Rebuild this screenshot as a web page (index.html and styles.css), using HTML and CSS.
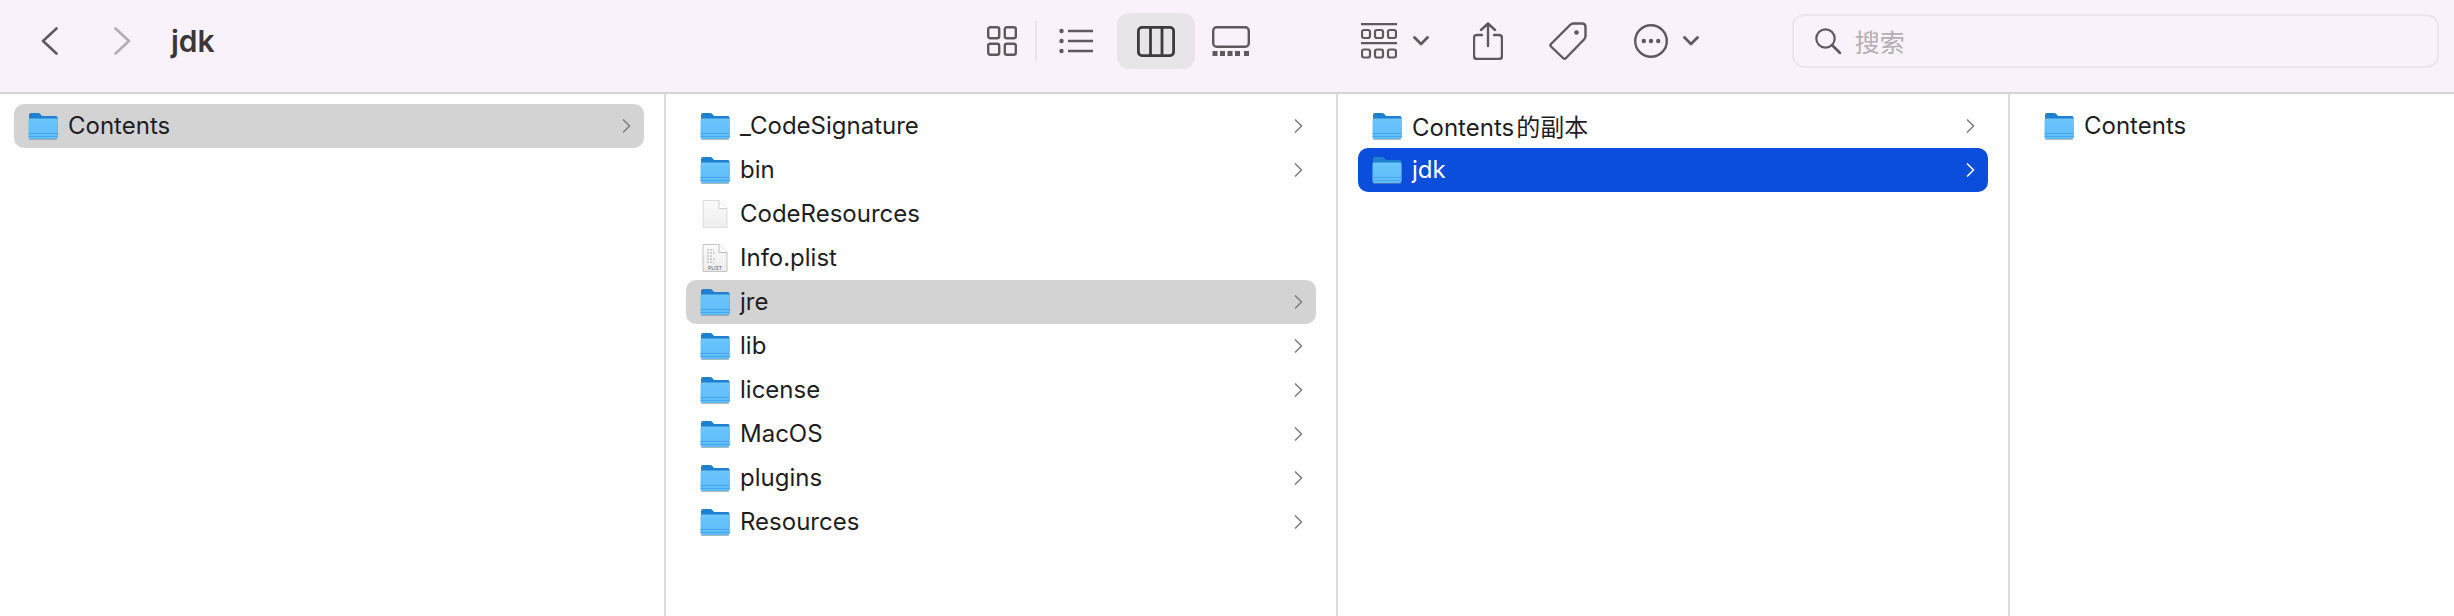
FILE: index.html
```html
<!DOCTYPE html>
<html lang="zh">
<head>
    <meta charset="UTF-8">
    <title>jdk</title>
    <link rel="stylesheet" href="styles.css">
</head>
<body>
    <svg class="defs" width="0" height="0">
        <defs>
            <linearGradient id="folder-body" x1="0" y1="0" x2="0" y2="1">
                <stop offset="0" stop-color="#6cc6fd"/>
                <stop offset="1" stop-color="#5cbbf9"/>
            </linearGradient>
            <linearGradient id="doc-body" x1="0" y1="0" x2="0" y2="1">
                <stop offset="0" stop-color="#fafafa"/>
                <stop offset="1" stop-color="#eeeeee"/>
            </linearGradient>
            <symbol id="folder" viewBox="0 0 30 28">
                <path d="M1 26V3q0-2 2-2h7q1.500 0 2.500 1.200L14 4h14q1.500 0 1.500 1.500V26z" fill="#1f7fd0"/>
                <path d="M.5 8q0-1.500 1.500-1.500h26q1.500 0 1.500 1.500v17q0 2-2 2H2.500q-2 0-2-2z" fill="url(#folder-body)"/>
                <path d="M.5 21.500h29M.5 24.500h29" stroke="#4aa6ea" stroke-width="1" fill="none"/>
                <path d="M1 27.500h28" stroke="#7a8a99" stroke-width="1" opacity=".6"/>
            </symbol>
            <symbol id="chev" viewBox="0 0 10 16">
                <path d="M2 1.500 8.500 8 2 14.500" fill="none" stroke="currentColor" stroke-width="1.500"/>
            </symbol>
            <symbol id="down" viewBox="0 0 16 10">
                <path d="M1.500 1.500 8 8l6.500-6.500" fill="none" stroke="currentColor" stroke-width="2.800" stroke-linecap="round" stroke-linejoin="round"/>
            </symbol>
        </defs>
    </svg>

    <header class="toolbar">
        <svg class="nav-back" width="17" height="28" viewBox="0 0 17 28"><path d="M15.500 1.500 2 14l13.500 12.500" fill="none" stroke="currentColor" stroke-width="2.600" stroke-linecap="round" stroke-linejoin="round"/></svg>
        <svg class="nav-forward" width="17" height="28" viewBox="0 0 17 28"><path d="M1.500 1.500 15 14 1.500 26.500" fill="none" stroke="currentColor" stroke-width="2.600" stroke-linecap="round" stroke-linejoin="round"/></svg>
        <span class="title">jdk</span>

        <div class="views">
            <svg class="ico" width="30" height="30" viewBox="0 0 30 30"><g fill="none" stroke="currentColor" stroke-width="2.400"><rect x="1.200" y="1.200" width="11" height="11" rx="2"/><rect x="17.800" y="1.200" width="11" height="11" rx="2"/><rect x="1.200" y="17.800" width="11" height="11" rx="2"/><rect x="17.800" y="17.800" width="11" height="11" rx="2"/></g></svg>
            <span class="view-sep"></span>
            <svg class="ico ico-list" width="34" height="26" viewBox="0 0 34 26"><g fill="currentColor"><circle cx="2.500" cy="3" r="2.200"/><circle cx="2.500" cy="13" r="2.200"/><circle cx="2.500" cy="23" r="2.200"/></g><path d="M9 3h25M9 13h25M9 23h25" stroke="currentColor" stroke-width="2.400"/></svg>
            <div class="view-on">
                <svg width="38" height="31" viewBox="0 0 38 31"><g fill="none" stroke="#3f3a3f" stroke-width="2.800"><rect x="1.400" y="1.400" width="35.200" height="28.200" rx="3.500"/><path d="M13.500 1.400v28.200M25 1.400v28.200"/></g></svg>
            </div>
            <svg class="ico ico-gallery" width="38" height="30" viewBox="0 0 38 30"><rect x="1.200" y="1.200" width="35.600" height="19.600" rx="3.500" fill="none" stroke="currentColor" stroke-width="2.400"/><g fill="currentColor"><rect x="0.500" y="25" width="5" height="5"/><rect x="8" y="25" width="5" height="5"/><rect x="15.500" y="25" width="5" height="5"/><rect x="23" y="25" width="5" height="5"/><rect x="32" y="25" width="5" height="5"/></g></svg>
        </div>

        <div class="actions">
            <svg class="ico" width="36" height="36" viewBox="0 0 36 36"><g fill="none" stroke="currentColor" stroke-width="2.200"><path d="M0 1.200h36M0 20.200h36"/><rect x="1" y="7" width="8" height="8" rx="2"/><rect x="14" y="7" width="8" height="8" rx="2"/><rect x="27" y="7" width="8" height="8" rx="2"/><rect x="1" y="26.500" width="8" height="8" rx="2"/><rect x="14" y="26.500" width="8" height="8" rx="2"/><rect x="27" y="26.500" width="8" height="8" rx="2"/></g></svg>
            <svg class="ico ico-down" width="16" height="10"><use href="#down"/></svg>
            <svg class="ico ico-share" width="30" height="38" viewBox="0 0 30 38"><g fill="none" stroke="currentColor" stroke-width="2.400" stroke-linecap="round" stroke-linejoin="round"><path d="M9 13H4q-3 0-3 3v18q0 3 3 3h22q3 0 3-3V16q0-3-3-3h-5"/><path d="M15 24V2M8 8l7-6.500L22 8"/></g></svg>
            <svg class="ico ico-tag" width="38" height="38" viewBox="0 0 38 38"><path d="M2 22 21 3q1.500-1.500 3.500-1.500H33q3.500 0 3.500 3.500v9q0 2-1.500 3.500L17 36q-1.500 1.500-3 0L2 24.500q-1.200-1.200 0-2.500z" fill="none" stroke="currentColor" stroke-width="2.400" stroke-linejoin="round"/><circle cx="27.500" cy="10.500" r="2.300" fill="currentColor"/></svg>
            <svg class="ico ico-more" width="34" height="34" viewBox="0 0 34 34"><circle cx="17" cy="17" r="15.800" fill="none" stroke="currentColor" stroke-width="2.400"/><g fill="currentColor"><circle cx="9.800" cy="17" r="2.200"/><circle cx="17" cy="17" r="2.200"/><circle cx="24.200" cy="17" r="2.200"/></g></svg>
            <svg class="ico ico-down-more" width="16" height="10"><use href="#down"/></svg>
        </div>

        <div class="search">
            <svg class="ico" width="26" height="26" viewBox="0 0 26 26"><circle cx="10.500" cy="10.500" r="9.200" fill="none" stroke="currentColor" stroke-width="2.200"/><path d="m17 17 8 8" stroke="currentColor" stroke-width="2.600" stroke-linecap="round"/></svg>
            <span class="search-text">搜索</span>
        </div>
    </header>

    <main class="browser">
        <section class="col col-first">
            <div class="row sel-gray"><svg class="folder"><use href="#folder"/></svg><span class="name">Contents</span><svg class="chev"><use href="#chev"/></svg></div>
        </section>

        <section class="col">
            <div class="row"><svg class="folder"><use href="#folder"/></svg><span class="name">_CodeSignature</span><svg class="chev"><use href="#chev"/></svg></div>
            <div class="row"><svg class="folder"><use href="#folder"/></svg><span class="name">bin</span><svg class="chev"><use href="#chev"/></svg></div>
            <div class="row">
                <svg class="doc" viewBox="0 0 26 30"><path d="M1 1.500h16l8 8v19H1z" fill="url(#doc-body)" stroke="#dcdcdc"/><path d="M17 1.500v8h8" fill="#fff" stroke="#d0d0d0"/></svg>
                <span class="name">CodeResources</span>
            </div>
            <div class="row">
                <svg class="doc" viewBox="0 0 26 30"><path d="M1 1.500h16l8 8v19H1z" fill="url(#doc-body)" stroke="#c4c4c4"/><path d="M17 1.500v8h8" fill="#fff" stroke="#bbb"/><path d="M5 7h7M5 10h8M5 13h6M5 16h8M5 19h7" stroke="#a9a9a9" stroke-width="1.200" stroke-dasharray="2 1"/><text class="doc-label" x="13" y="26.500" text-anchor="middle">PLIST</text></svg>
                <span class="name">Info.plist</span>
            </div>
            <div class="row sel-gray"><svg class="folder"><use href="#folder"/></svg><span class="name">jre</span><svg class="chev"><use href="#chev"/></svg></div>
            <div class="row"><svg class="folder"><use href="#folder"/></svg><span class="name">lib</span><svg class="chev"><use href="#chev"/></svg></div>
            <div class="row"><svg class="folder"><use href="#folder"/></svg><span class="name">license</span><svg class="chev"><use href="#chev"/></svg></div>
            <div class="row"><svg class="folder"><use href="#folder"/></svg><span class="name">MacOS</span><svg class="chev"><use href="#chev"/></svg></div>
            <div class="row"><svg class="folder"><use href="#folder"/></svg><span class="name">plugins</span><svg class="chev"><use href="#chev"/></svg></div>
            <div class="row"><svg class="folder"><use href="#folder"/></svg><span class="name">Resources</span><svg class="chev"><use href="#chev"/></svg></div>
        </section>

        <section class="col">
            <div class="row"><svg class="folder"><use href="#folder"/></svg><span class="name">Contents<span class="cjk">的副本</span></span><svg class="chev"><use href="#chev"/></svg></div>
            <div class="row sel-blue"><svg class="folder"><use href="#folder"/></svg><span class="name">jdk</span><svg class="chev"><use href="#chev"/></svg></div>
        </section>

        <section class="col col-last">
            <div class="row"><svg class="folder"><use href="#folder"/></svg><span class="name">Contents</span></div>
        </section>
    </main>
</body>
</html>
```

FILE: styles.css
```css
* {
    box-sizing: border-box;
}
html, body {
    margin: 0;
    width: 100%;
    height: 100%;
    overflow: hidden;
    background: #fff;
}
body {
    font-family: 'Inter', 'Noto Sans CJK SC', sans-serif;
    color: #1f1e1f;
}
.defs {
    position: absolute;
}

/* toolbar */
.toolbar {
    display: flex;
    align-items: center;
    height: 94px;
    padding-bottom: 10px;
    background: #f9f2fa;
    border-bottom: 2px solid #d8d3d8;
    color: #5f595f;
}
.nav-back {
    margin-left: 41px;
    color: #5f5a5f;
}
.nav-forward {
    margin-left: 56px;
    color: #b2aeb2;
}
.title {
    margin-left: 40px;
    font-size: 30px;
    font-weight: 600;
    color: #3a373a;
}
.views {
    display: flex;
    align-items: center;
    margin-left: 772px;
}
.view-sep {
    width: 2px;
    height: 40px;
    margin-left: 18px;
    background: #e8e2e9;
}
.ico-list {
    margin-left: 22px;
}
.view-on {
    display: flex;
    align-items: center;
    justify-content: center;
    width: 78px;
    height: 56px;
    margin-left: 24px;
    border-radius: 12px;
    background: #e9e3ea;
}
.ico-gallery {
    margin-left: 17px;
}
.actions {
    display: flex;
    align-items: center;
    margin-left: 111px;
}
.ico-down {
    margin-left: 16px;
}
.ico-share {
    margin-left: 44px;
}
.ico-tag {
    margin-left: 46px;
}
.ico-more {
    margin-left: 47px;
}
.ico-down-more {
    margin-left: 15px;
}
.search {
    display: flex;
    align-items: center;
    width: 647px;
    height: 54px;
    margin-left: 93px;
    padding-left: 21px;
    border: 2px solid #ebe5ec;
    border-radius: 12px;
}
.search-text {
    margin-left: 14px;
    font-size: 25px;
    color: #b4afb4;
}

/* columns */
.browser {
    display: grid;
    grid-template-columns: 666px 672px 672px 1fr;
    height: 522px;
}
.col {
    padding: 10px 20px 0 20px;
    border-right: 2px solid #dcdcdc;
}
.col-first {
    padding-left: 14px;
}
.col-last {
    border-right: 0;
}
.row {
    display: flex;
    align-items: center;
    height: 44px;
    padding: 0 13px 0 14px;
    border-radius: 10px;
    font-size: 24px;
}
.sel-gray {
    background: #d3d3d3;
}
.sel-blue {
    background: #0a4edb;
    color: #fff;
}
.folder {
    flex: none;
    width: 30px;
    height: 28px;
}
.doc {
    flex: none;
    width: 26px;
    height: 30px;
    margin: 0 2px;
}
.doc-label {
    font-size: 5px;
    fill: #555;
}
.name {
    margin-left: 10px;
    padding-bottom: 2px;
    flex: 1;
}
.cjk {
    margin-left: 2px;
}
.chev {
    flex: none;
    width: 10px;
    height: 16px;
    color: #7d7d7d;
}
.sel-blue .chev {
    color: #fff;
}
```
